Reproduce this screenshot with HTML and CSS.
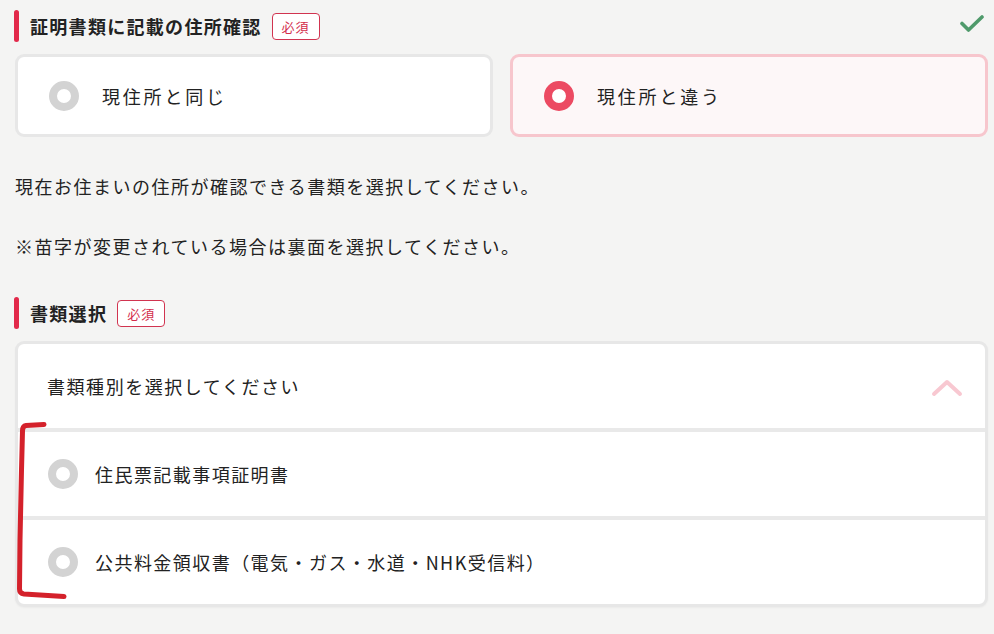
FILE: index.html
```html
<!DOCTYPE html>
<html lang="ja">
<head>
<meta charset="utf-8">
<title>住所確認</title>
<link rel="stylesheet" href="styles.css">
</head>
<body>
<div class="page">
  <div class="field-head">
    <h2 class="field-title">証明書類に記載の住所確認</h2>
    <span class="badge">必須</span>
    <svg class="check" width="24" height="18" viewBox="0 0 24 18"><path d="M2 8.5 L8.5 15 L22 2" fill="none" stroke="#4f9a6b" stroke-width="3.6" stroke-linecap="round" stroke-linejoin="round"/></svg>
  </div>

  <div class="choice-grid">
    <label class="choice">
      <span class="radio"></span>
      <span class="choice-text">現住所と同じ</span>
    </label>
    <label class="choice choice-selected">
      <span class="radio radio-on"></span>
      <span class="choice-text">現住所と違う</span>
    </label>
  </div>

  <div class="notes">
    <p class="note">現在お住まいの住所が確認できる書類を選択してください。</p>
    <p class="note note-gap">※苗字が変更されている場合は裏面を選択してください。</p>
  </div>

  <div class="field-head field-head-2">
    <h2 class="field-title">書類選択</h2>
    <span class="badge">必須</span>
  </div>

  <div class="dropdown">
    <div class="dropdown-head">
      <span class="dropdown-label">書類種別を選択してください</span>
      <svg class="chevron" width="32" height="20" viewBox="0 0 32 20"><path d="M3 17 L16 5 L29 17" fill="none" stroke="#f8c8d1" stroke-width="4" stroke-linecap="round" stroke-linejoin="round"/></svg>
    </div>
    <div class="option">
      <span class="radio"></span>
      <span class="option-text">住民票記載事項証明書</span>
    </div>
    <div class="option">
      <span class="radio"></span>
      <span class="option-text">公共料金領収書（電気・ガス・水道・NHK受信料）</span>
    </div>
  </div>
</div>

<svg class="annotation" width="994" height="634" viewBox="0 0 994 634">
  <path d="M44 424.5 L26 425.5 Q22.5 426 22.5 431 L21.5 470 L20 540 L19.5 589 Q19.5 593.5 24 594 L64 596.5" fill="none" stroke="#d4212b" stroke-width="5" stroke-linecap="round" stroke-linejoin="round"/>
</svg>
</body>
</html>
```

FILE: styles.css
```css
* { box-sizing: border-box; }

html, body {
  margin: 0;
  padding: 0;
}

body {
  background: #f4f4f3;
  font-family: "Noto Sans CJK JP", "Noto Sans", sans-serif;
  color: #222;
  position: relative;
  width: 994px;
  height: 634px;
  overflow: hidden;
}

.page {
  padding: 10px 6px 0 15px;
}

.field-head {
  display: flex;
  align-items: center;
  height: 32px;
  margin-left: -1px;
}

.field-head::before {
  content: "";
  width: 5px;
  height: 32px;
  border-radius: 3px;
  background: #e2294a;
  margin-right: 11px;
  flex: none;
}

.field-title {
  margin: 0;
  font-size: 18px;
  font-weight: 700;
  letter-spacing: 1.3px;
  color: #222;
  line-height: 1;
}

.badge {
  margin-left: 10px;
  height: 27px;
  padding: 0 9px;
  display: inline-flex;
  align-items: center;
  border: 1px solid #d13450;
  border-radius: 4px;
  color: #d32d4b;
  font-size: 13px;
  letter-spacing: 1px;
  background: #fff;
}

.check {
  margin-left: auto;
  margin-right: 4px;
  margin-top: -4px;
}

.choice-grid {
  display: grid;
  grid-template-columns: 1fr 1fr;
  gap: 17px;
  margin-top: 12px;
}

.choice {
  display: flex;
  align-items: center;
  height: 83px;
  border: 3px solid #e7e7e7;
  border-radius: 9px;
  background: #fff;
  padding-left: 31px;
  gap: 23px;
}

.choice-selected {
  border-color: #f7c6cd;
  background: #fdf7f8;
}

.choice-text {
  font-size: 18px;
  letter-spacing: 2.8px;
  color: #222;
}

.radio {
  width: 30px;
  height: 30px;
  border-radius: 50%;
  border: 8px solid #d3d3d3;
  background: #fff;
  flex: none;
}

.radio-on {
  border-color: #ec4a62;
}

.notes {
  margin-top: 34px;
}

.note {
  margin: 0;
  font-size: 18px;
  line-height: 30px;
  letter-spacing: 1.5px;
  color: #222;
}

.note-gap {
  margin-top: 30px;
}

.field-head-2 {
  margin-top: 36px;
}

.dropdown {
  margin-top: 12px;
  border: 3px solid #e7e7e7;
  border-radius: 9px;
  background: #fff;
  overflow: hidden;
  box-shadow: 0 1px 2px rgba(0,0,0,0.04);
}

.dropdown-head {
  height: 84px;
  display: flex;
  align-items: center;
  justify-content: space-between;
  padding: 0 22px 0 29px;
}

.dropdown-label {
  font-size: 18px;
  letter-spacing: 1.55px;
  color: #222;
}

.chevron {
  margin-top: 2px;
}

.option {
  height: 88px;
  border-top: 4px solid #e9e9e9;
  display: flex;
  align-items: center;
  padding-left: 30px;
  gap: 17px;
}

.option-text {
  font-size: 18px;
  letter-spacing: 1.45px;
  color: #222;
}

.annotation {
  position: absolute;
  left: 0;
  top: 0;
  pointer-events: none;
}
```
